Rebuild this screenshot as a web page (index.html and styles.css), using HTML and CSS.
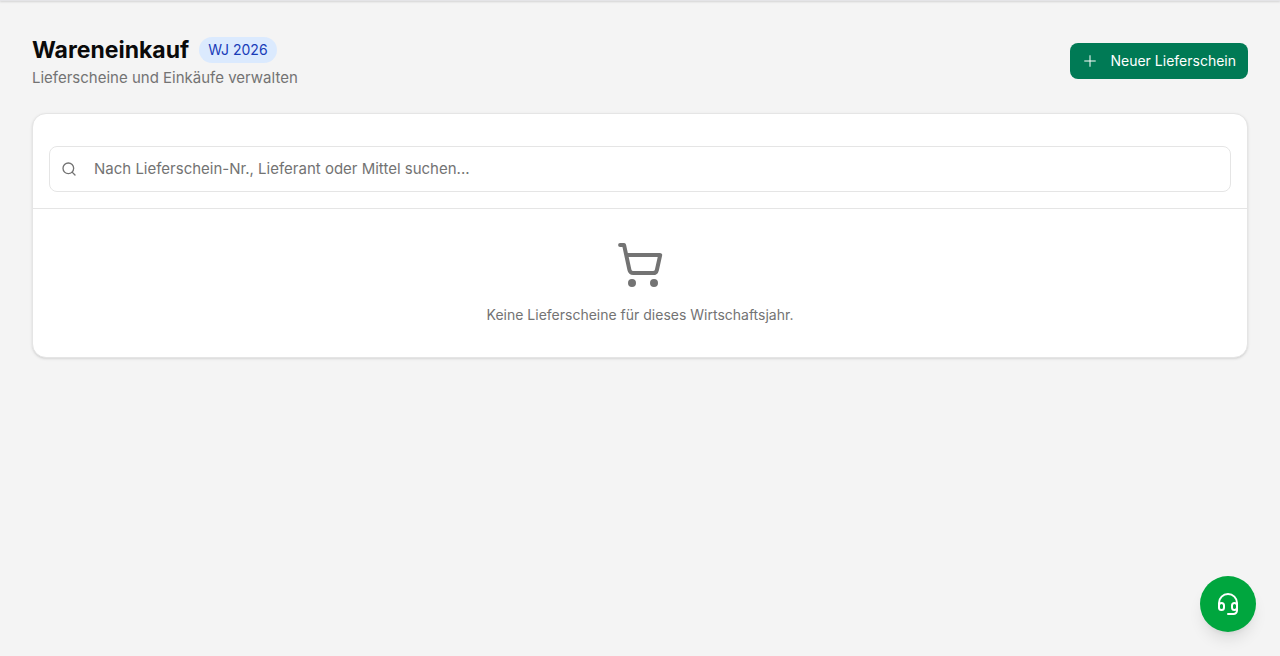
FILE: index.html
```html
<!DOCTYPE html>
<html lang="de">
<head>
<meta charset="utf-8">
<meta name="viewport" content="width=device-width, initial-scale=1">
<title>Wareneinkauf</title>
<link rel="stylesheet" href="styles.css">
</head>
<body>
<header class="topbar"></header>
<main class="page">
  <div class="page-head">
    <div class="heading">
      <div class="title-row">
        <h1 class="title">Wareneinkauf</h1>
        <span class="badge">WJ 2026</span>
      </div>
      <p class="subtitle">Lieferscheine und Einkäufe verwalten</p>
    </div>
    <button class="primary" type="button">
      <svg class="icon icon-thin" viewBox="0 0 24 24" aria-hidden="true"><path d="M4 12h16M12 4v16"/></svg>
      Neuer Lieferschein
    </button>
  </div>
  <section class="card">
    <div class="card-search">
      <label class="search">
        <svg class="icon" viewBox="0 0 24 24" aria-hidden="true"><circle cx="11" cy="11" r="8"/><path d="m21 21-4.3-4.3"/></svg>
        <input class="search-input" type="search" aria-label="Lieferscheine suchen" placeholder="Nach Lieferschein-Nr., Lieferant oder Mittel suchen...">
      </label>
    </div>
    <div class="empty">
      <svg class="icon icon-large" viewBox="0 0 24 24" aria-hidden="true"><circle cx="8" cy="21" r="1"/><circle cx="19" cy="21" r="1"/><path d="M2.05 2.05h2l2.66 12.42a2 2 0 0 0 2 1.58h9.78a2 2 0 0 0 1.95-1.57l1.65-7.43H5.12"/></svg>
      <p class="empty-text">Keine Lieferscheine für dieses Wirtschaftsjahr.</p>
    </div>
  </section>
</main>
<button class="support" type="button" aria-label="Support">
  <svg class="icon icon-medium" viewBox="0 0 24 24" aria-hidden="true"><path d="M3 15.5V11a9 9 0 0 1 18 0v7.5a3.5 3.5 0 0 1-3.5 3.5H12"/><path d="M3 13.5a2.5 2.5 0 0 1 5 0v2a2.5 2.5 0 0 1-5 0Z"/><path d="M21 13.5a2.5 2.5 0 0 0-5 0v2a2.5 2.5 0 0 0 5 0Z"/></svg>
</button>
</body>
</html>
```
FILE: styles.css
```css
*, *::before, *::after { box-sizing: border-box; }

body {
  margin: 0;
  min-height: 100vh;
  background: #f4f4f4;
  color: #0a0a0a;
  font: 15px/24px Inter, "Liberation Sans", sans-serif;
}

h1, p { margin: 0; }

button, input { font: inherit; }

.topbar {
  height: 1px;
  background: #e4e4e7;
  box-shadow: 0 1px 2px rgba(0, 0, 0, 0.2);
}

.page {
  display: flex;
  flex-direction: column;
  gap: 24px;
  padding: 32px;
}

.page-head {
  display: flex;
  align-items: center;
  justify-content: space-between;
  gap: 16px;
}

.title-row {
  display: flex;
  align-items: center;
  gap: 10px;
}

.title {
  font-size: 23px;
  line-height: 34px;
  font-weight: 700;
}

.badge {
  padding: 3px 9px;
  border-radius: 999px;
  background: #dbeafe;
  color: #193cb8;
  font-size: 14px;
  line-height: 20px;
  font-weight: 400;
}

.subtitle {
  color: #737373;
  line-height: 22px;
}

.icon {
  width: 16px;
  height: 16px;
  flex: none;
  fill: none;
  stroke: currentColor;
  stroke-width: 2;
  stroke-linecap: round;
  stroke-linejoin: round;
}

.icon-thin { stroke-width: 1.5; }
.icon-medium { width: 24px; height: 24px; }
.icon-large { width: 48px; height: 48px; }

.primary {
  display: flex;
  align-items: center;
  gap: 12px;
  height: 36px;
  padding: 0 12px;
  border: 0;
  border-radius: 8px;
  background: #007a55;
  color: #fff;
  font-size: 14px;
  font-weight: 400;
}

.card {
  overflow: hidden;
  border: 1px solid #e5e5e5;
  border-radius: 14px;
  background: #fff;
  box-shadow: 0 1px 3px rgba(0, 0, 0, 0.1), 0 1px 2px -1px rgba(0, 0, 0, 0.1);
}

.card-search {
  padding: 32px 16px 16px;
  border-bottom: 1px solid #e5e5e5;
}

.search {
  display: flex;
  align-items: center;
  gap: 17px;
  height: 46px;
  padding: 0 11px;
  border: 1px solid #e5e5e5;
  border-radius: 8px;
  color: #737373;
}

.search-input {
  flex: 1;
  min-width: 0;
  padding: 0;
  border: 0;
  outline: 0;
  background: none;
}

.search-input::placeholder { color: #737373; }

.empty {
  display: flex;
  flex-direction: column;
  align-items: center;
  gap: 16px;
  padding: 32px;
  color: #737373;
}

.empty-text {
  font-size: 14px;
  line-height: 20px;
}

.support {
  position: fixed;
  right: 24px;
  bottom: 24px;
  display: grid;
  place-items: center;
  width: 56px;
  height: 56px;
  padding: 0;
  border: 0;
  border-radius: 50%;
  background: #00a63e;
  color: #fff;
  box-shadow: 0 10px 15px -3px rgba(0, 0, 0, 0.1), 0 4px 6px -4px rgba(0, 0, 0, 0.1);
}
```
